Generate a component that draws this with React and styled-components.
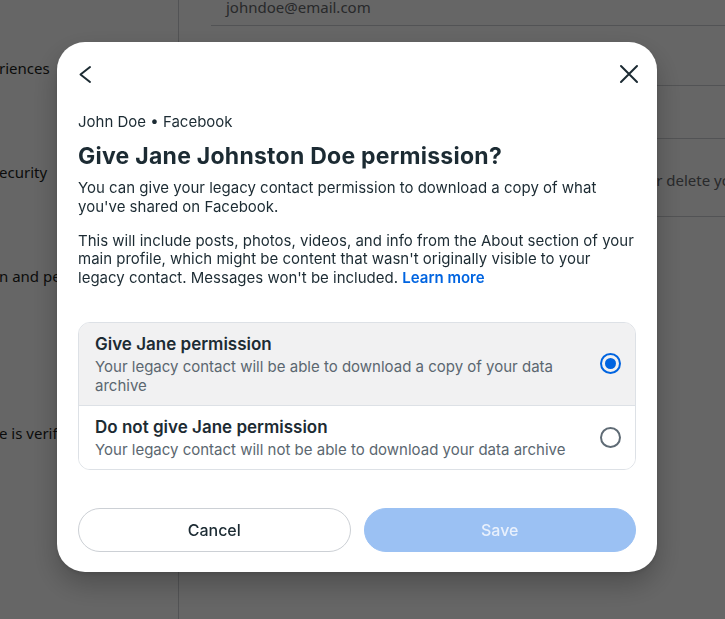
import React, { useState } from 'react';
import styled, { createGlobalStyle } from 'styled-components';

const GlobalStyle = createGlobalStyle`
  html, body { margin: 0; padding: 0; }
  body {
    font-family: Inter, "Noto Sans", sans-serif;
    background: #ffffff;
    overflow: hidden;
  }
  * { box-sizing: border-box; }
`;

const sidebarItems = [
  { label: 'riences', gap: 58 },
  { label: 'ecurity', gap: 84 },
  { label: 'n and permissions', gap: 84 },
  { label: 'e is verified', gap: 137 },
];

const options = [
  {
    id: 'give',
    title: 'Give Jane permission',
    text: 'Your legacy contact will be able to download a copy of your data archive',
  },
  {
    id: 'deny',
    title: 'Do not give Jane permission',
    text: 'Your legacy contact will not be able to download your data archive',
  },
];

export default function App() {
  const [choice, setChoice] = useState('give');

  return (
    <>
      <GlobalStyle />
      <Page>
        <Sidebar>
          {sidebarItems.map((item) => (
            <SideItem key={item.label} $gap={item.gap}>{item.label}</SideItem>
          ))}
        </Sidebar>
        <Main>
          <SettingRow $h={26}>
            <Muted $top={-3}>johndoe@email.com</Muted>
          </SettingRow>
          <SettingRow $h={60}>
            <RowTitle>Birthday</RowTitle>
          </SettingRow>
          <SettingRow $h={53} />
          <SettingRow $h={78}>
            <Muted $top={31}>Choose a legacy contact to manage your memorial account or delete your account</Muted>
          </SettingRow>
        </Main>
      </Page>

      <Overlay>
        <Modal>
          <ModalHeader>
            <IconButton aria-label="Back">
              <svg width="24" height="24" viewBox="0 0 24 24" fill="none">
                <path d="M17 5 L7.5 12.5 L17 20" stroke="#1c2b33" strokeWidth="2" strokeLinecap="round" strokeLinejoin="round" />
              </svg>
            </IconButton>
            <IconButton aria-label="Close">
              <svg width="24" height="24" viewBox="0 0 24 24" fill="none">
                <path d="M4 4 L20 20 M20 4 L4 20" stroke="#1c2b33" strokeWidth="2" strokeLinecap="round" />
              </svg>
            </IconButton>
          </ModalHeader>

          <ModalBody>
            <Eyebrow>John Doe • Facebook</Eyebrow>
            <Title>Give Jane Johnston Doe permission?</Title>
            <Paragraph>
              You can give your legacy contact permission to download a copy of what
              you've shared on Facebook.
            </Paragraph>
            <Paragraph $space={15}>
              This will include posts, photos, videos, and info from the About section of your
              main profile, which might be content that wasn't originally visible to your
              legacy contact. Messages won't be included. <LearnMore href="#">Learn more</LearnMore>
            </Paragraph>

            <OptionList>
              {options.map((opt) => (
                <Option
                  key={opt.id}
                  $active={choice === opt.id}
                  onClick={() => setChoice(opt.id)}
                >
                  <OptionText>
                    <OptionTitle>{opt.title}</OptionTitle>
                    <OptionSub>{opt.text}</OptionSub>
                  </OptionText>
                  <Radio $checked={choice === opt.id} />
                </Option>
              ))}
            </OptionList>
          </ModalBody>

          <Footer>
            <Button>Cancel</Button>
            <Button $primary disabled>Save</Button>
          </Footer>
        </Modal>
      </Overlay>
    </>
  );
}

const Page = styled.div`
  display: flex;
  height: 100vh;
  overflow: hidden;
  font-family: "Noto Sans", sans-serif;
  font-size: 15px;
  color: #1c1e21;
`;

const Sidebar = styled.div`
  width: 179px;
  flex-shrink: 0;
  border-right: 1px solid #ced0d4;
  overflow: hidden;
  white-space: nowrap;
  display: flex;
  flex-direction: column;
`;

const SideItem = styled.div`
  margin-top: ${(p) => p.$gap}px;
  margin-left: -1px;
  line-height: 20px;
`;

const Main = styled.div`
  flex: 1;
  min-width: 0;
  overflow: hidden;
  padding-left: 32px;
  display: flex;
  flex-direction: column;
`;

const SettingRow = styled.div`
  height: ${(p) => p.$h}px;
  border-bottom: 1px solid #ced0d4;
  white-space: nowrap;
  overflow: hidden;
  padding-left: 15px;
`;

const Muted = styled.div`
  margin-top: ${(p) => p.$top}px;
  color: #65676b;
  line-height: 20px;
`;

const RowTitle = styled.div`
  margin-top: 13px;
  font-size: 16px;
  font-weight: 500;
  line-height: 20px;
`;

const Overlay = styled.div`
  position: fixed;
  inset: 0;
  background: rgba(0, 0, 0, 0.6);
  display: flex;
  align-items: flex-start;
  padding: 42px 0 0 57px;
`;

const Modal = styled.div`
  width: 600px;
  height: 530px;
  background: #ffffff;
  border-radius: 28px;
  box-shadow: 0 12px 28px rgba(0, 0, 0, 0.25), 0 2px 4px rgba(0, 0, 0, 0.1);
  display: flex;
  flex-direction: column;
  font-family: Inter, "Noto Sans", sans-serif;
  color: #1c2b33;
`;

const ModalHeader = styled.div`
  display: flex;
  justify-content: space-between;
  padding: 20px 16px 0;
`;

const IconButton = styled.button`
  width: 24px;
  height: 24px;
  padding: 0;
  border: 0;
  background: none;
  cursor: pointer;
  display: flex;
`;

const ModalBody = styled.div`
  padding: 26px 21px 0;
  display: flex;
  flex-direction: column;
`;

const Eyebrow = styled.div`
  font-size: 15px;
  line-height: 19px;
`;

const Title = styled.h2`
  margin: 11px 0 0;
  font-size: 23px;
  font-weight: 700;
  line-height: 28px;
  letter-spacing: 0.25px;
`;

const Paragraph = styled.p`
  margin: ${(p) => p.$space || 9}px 0 0;
  font-size: 15px;
  line-height: 18.75px;
`;

const LearnMore = styled.a`
  color: #0064e0;
  font-weight: 600;
  text-decoration: none;
`;

const OptionList = styled.div`
  margin-top: 34px;
  border: 1px solid #dde1e6;
  border-radius: 12px;
  overflow: hidden;
  display: flex;
  flex-direction: column;
`;

const Option = styled.div`
  display: flex;
  align-items: center;
  gap: 24px;
  padding: 10px 14px 10px 16px;
  background: ${(p) => (p.$active ? '#f1f1f2' : '#ffffff')};
  cursor: pointer;
  & + & {
    border-top: 1px solid #dde1e6;
  }
`;

const OptionText = styled.div`
  flex: 1;
  display: flex;
  flex-direction: column;
  gap: 2px;
`;

const OptionTitle = styled.div`
  font-size: 17px;
  font-weight: 600;
  line-height: 22px;
`;

const OptionSub = styled.div`
  font-size: 15px;
  line-height: 19px;
  color: #5b6770;
`;

const Radio = styled.span`
  width: 21px;
  height: 21px;
  flex-shrink: 0;
  border-radius: 50%;
  border: 2px solid ${(p) => (p.$checked ? '#0064e0' : '#5f6b75')};
  display: flex;
  align-items: center;
  justify-content: center;
  &::after {
    content: '';
    width: 11px;
    height: 11px;
    border-radius: 50%;
    background: ${(p) => (p.$checked ? '#0064e0' : 'transparent')};
  }
`;

const Footer = styled.div`
  margin-top: auto;
  padding: 0 21px 20px;
  display: grid;
  grid-template-columns: 1fr 1fr;
  gap: 13px;
`;

const Button = styled.button`
  height: 44px;
  border-radius: 22px;
  font-family: Inter, "Noto Sans", sans-serif;
  font-size: 16px;
  font-weight: 500;
  cursor: pointer;
  border: 1px solid ${(p) => (p.$primary ? '#9bc1f3' : '#ccd0d5')};
  background: ${(p) => (p.$primary ? '#9bc1f3' : '#ffffff')};
  color: ${(p) => (p.$primary ? '#e8f0fc' : '#1c2b33')};
  &:disabled { cursor: default; }
`;
